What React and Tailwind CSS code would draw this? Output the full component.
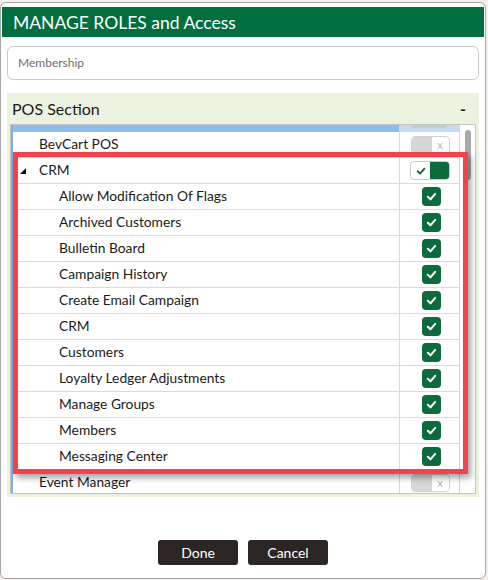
import React from "react";

const children = [
  "Allow Modification Of Flags",
  "Archived Customers",
  "Bulletin Board",
  "Campaign History",
  "Create Email Campaign",
  "CRM",
  "Customers",
  "Loyalty Ledger Adjustments",
  "Manage Groups",
  "Members",
  "Messaging Center",
];

function Check({ className = "" }) {
  return (
    <svg viewBox="0 0 12 12" className={className} fill="none">
      <path d="M2.6 6.3 L5 8.6 L9.4 3.6" stroke="currentColor" strokeWidth="1.9" strokeLinecap="round" strokeLinejoin="round" />
    </svg>
  );
}

function CheckBox() {
  return (
    <div className="ml-[3px] w-[19px] h-[19px] rounded-[4px] bg-[#0c6b3c] flex items-center justify-center text-white">
      <Check className="w-[13px] h-[13px]" />
    </div>
  );
}

function SwitchOff() {
  return (
    <div className="ml-[1px] w-[39px] h-[18px] rounded-[4px] border border-[#d2d2d2] flex overflow-hidden bg-white">
      <div className="w-[20px] h-full bg-[#d7d7d7]" />
      <div className="flex-1 flex items-center justify-center text-[#b5b5b5] text-[11px] leading-none">x</div>
    </div>
  );
}

function SwitchOn() {
  return (
    <div className="ml-[1px] w-[40px] h-[19px] rounded-[4px] border border-[#c9c9c9] flex overflow-hidden bg-white">
      <div className="w-[19px] h-full flex items-center justify-center text-[#0c6b3c]">
        <Check className="w-[12px] h-[12px]" />
      </div>
      <div className="flex-1 h-full bg-[#0c6b3c]" />
    </div>
  );
}

function Row({ label, indent, right, caret }) {
  return (
    <div className="h-[26px] shrink-0 flex border-b border-[#dadada]">
      <div className="flex-1 flex items-center relative">
        {caret && (
          <span className="absolute left-[7px] top-[10px] w-0 h-0 border-l-[6px] border-l-transparent border-b-[6px] border-b-[#111]" />
        )}
        <span className={indent ? "pl-[46px]" : "pl-[26px]"}>{label}</span>
      </div>
      <div className="w-[60px] border-l border-[#dadada] flex items-center justify-center">{right}</div>
    </div>
  );
}

export default function App() {
  return (
    <div
      className="w-[488px] h-[580px] bg-[#f4efea] overflow-hidden text-[#1b1b1b]"
      style={{ fontFamily: "Lato, 'Open Sans', sans-serif" }}
    >
      <div className="mt-[2px] w-[486px] h-[577px] border border-[#a7a7a7] rounded-[6px] bg-white flex flex-col">
        <div className="mt-[4px] mx-[1px] h-[30px] bg-[#006e3e] text-white text-[17.5px] leading-[31px] pl-[11px]">
          MANAGE ROLES and Access
        </div>
        <div className="mx-[6px] mt-[9px] h-[34px] rounded-[6px] border border-[#cacaca] flex items-center pl-[10px] text-[12px] text-[#6d6d6d]">
          Membership
        </div>
        <div className="mx-[6px] mt-[13px] h-[404px] bg-[#ebf2df] flex flex-col">
          <div className="h-[31px] flex items-center justify-between pl-[5px] pr-[13px] text-[16px]">
            <span>POS Section</span>
            <span className="text-[16px] font-bold">-</span>
          </div>
          <div className="mx-[3px] h-[370px] border border-[#c4c4c4] bg-white flex relative">
            <div className="flex-1 border-l-2 border-[#7fb0de] flex flex-col text-[13.8px] overflow-hidden">
              <div className="h-[7px] flex shrink-0">
                <div className="flex-1 bg-[#8ebde7]" />
                <div className="w-[60px] bg-[#c6dbef] flex justify-center">
                  <div className="w-[36px] h-[3px] bg-[#c9c9c9] rounded-b" />
                </div>
              </div>
              <Row label="BevCart POS" right={<SwitchOff />} />
              <Row label="CRM" caret right={<SwitchOn />} />
              {children.map((c) => (
                <Row key={c} label={c} indent right={<CheckBox />} />
              ))}
              <Row label="Event Manager" right={<SwitchOff />} />
            </div>
            <div className="w-[16px] border-l border-[#d4d4d4] bg-white flex justify-center pt-[5px]">
              <div className="w-[6px] h-[50px] rounded-full bg-[#a9a9a9]" />
            </div>
            <div className="absolute left-[2px] top-[27px] w-[455px] h-[322px] border-[5px] border-[#f1434d] shadow-[3px_4px_6px_rgba(0,0,0,0.35)] pointer-events-none" />
          </div>
        </div>
        <div className="flex-1 flex items-end justify-center gap-[10px] pb-[13px]">
          <button className="w-[80px] h-[25px] rounded-[3px] bg-[#2b2523] text-white text-[14px]">Done</button>
          <button className="w-[80px] h-[25px] rounded-[3px] bg-[#2b2523] text-white text-[14px]">Cancel</button>
        </div>
      </div>
    </div>
  );
}
